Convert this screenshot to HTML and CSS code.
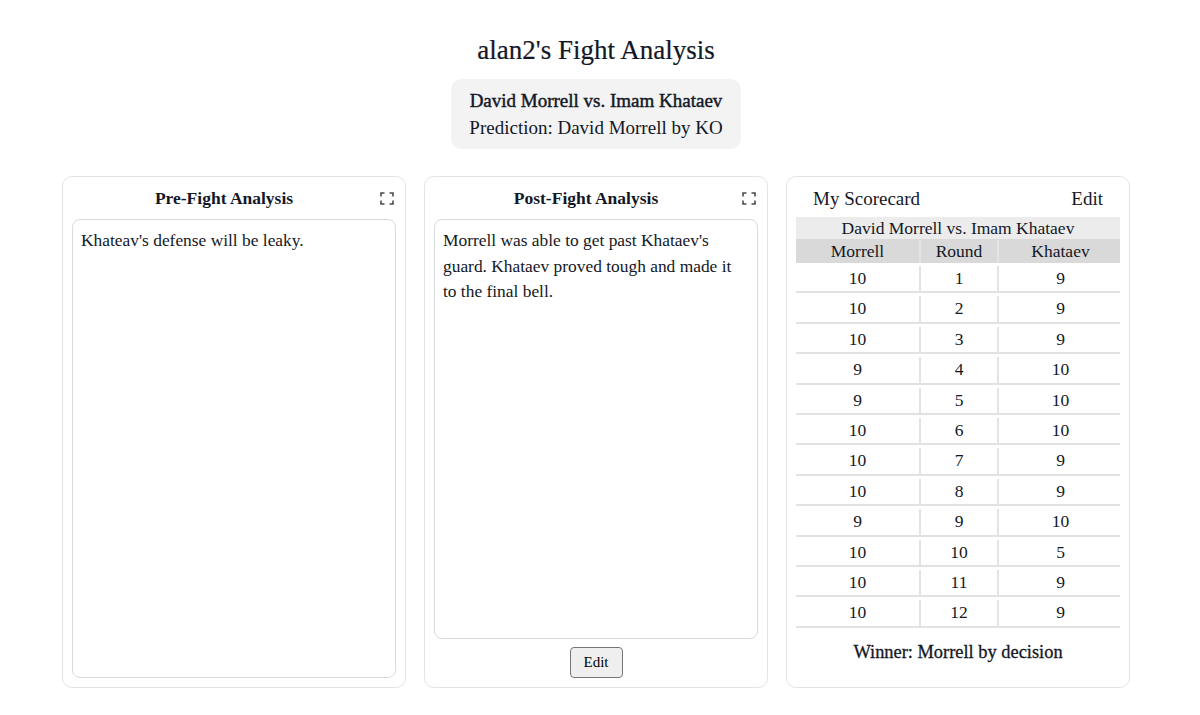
FILE: index.html
```html
<!DOCTYPE html>
<html>
<head>
<meta charset="utf-8">
<title>alan2's Fight Analysis</title>
<link rel="stylesheet" href="styles.css">
</head>
<body>
<div class="page">
  <header class="top">
    <h1 class="title">alan2's Fight Analysis</h1>
    <div class="fight-info">
      <div class="matchup">David Morrell vs. Imam Khataev</div>
      <div class="prediction">Prediction: David Morrell by KO</div>
    </div>
  </header>

  <main class="board">
    <section class="card">
      <div class="card-head">
        <h2 class="card-title">Pre-Fight Analysis</h2>
        <span class="expand">
          <svg width="14" height="13" viewBox="0 0 14 13"><path d="M1 4.5V1H4.5M9.5 1H13V4.5M13 8.5V12H9.5M4.5 12H1V8.5" fill="none" stroke="#4b4b4b" stroke-width="1.6"/></svg>
        </span>
      </div>
      <div class="note">Khateav's defense will be leaky.</div>
    </section>

    <section class="card">
      <div class="card-head">
        <h2 class="card-title">Post-Fight Analysis</h2>
        <span class="expand">
          <svg width="14" height="13" viewBox="0 0 14 13"><path d="M1 4.5V1H4.5M9.5 1H13V4.5M13 8.5V12H9.5M4.5 12H1V8.5" fill="none" stroke="#4b4b4b" stroke-width="1.6"/></svg>
        </span>
      </div>
      <div class="note">Morrell was able to get past Khataev's guard. Khataev proved tough and made it to the final bell.</div>
      <div class="actions"><button class="btn">Edit</button></div>
    </section>

    <section class="card">
      <div class="score-head">
        <span class="score-title">My Scorecard</span>
        <span class="score-edit">Edit</span>
      </div>
      <div class="scorecard">
        <div class="sc-title">David Morrell vs. Imam Khataev</div>
        <div class="sc-row sc-header">
          <div class="c">Morrell</div><div class="c mid">Round</div><div class="c">Khataev</div>
        </div>
        <div class="sc-row"><div class="c">10</div><div class="c mid">1</div><div class="c">9</div></div>
        <div class="sc-row"><div class="c">10</div><div class="c mid">2</div><div class="c">9</div></div>
        <div class="sc-row"><div class="c">10</div><div class="c mid">3</div><div class="c">9</div></div>
        <div class="sc-row"><div class="c">9</div><div class="c mid">4</div><div class="c">10</div></div>
        <div class="sc-row"><div class="c">9</div><div class="c mid">5</div><div class="c">10</div></div>
        <div class="sc-row"><div class="c">10</div><div class="c mid">6</div><div class="c">10</div></div>
        <div class="sc-row"><div class="c">10</div><div class="c mid">7</div><div class="c">9</div></div>
        <div class="sc-row"><div class="c">10</div><div class="c mid">8</div><div class="c">9</div></div>
        <div class="sc-row"><div class="c">9</div><div class="c mid">9</div><div class="c">10</div></div>
        <div class="sc-row"><div class="c">10</div><div class="c mid">10</div><div class="c">5</div></div>
        <div class="sc-row"><div class="c">10</div><div class="c mid">11</div><div class="c">9</div></div>
        <div class="sc-row"><div class="c">10</div><div class="c mid">12</div><div class="c">9</div></div>
      </div>
      <div class="winner">Winner: Morrell by decision</div>
    </section>
  </main>
</div>
</body>
</html>
```

FILE: styles.css
```css
* { box-sizing: border-box; }

html, body {
  margin: 0;
  padding: 0;
  background: #ffffff;
}

body {
  font-family: "Liberation Serif", "Times New Roman", serif;
  color: #141826;
}

.page {
  width: 1068px;
  margin-left: 62px;
}

.top {
  display: flex;
  flex-direction: column;
  align-items: center;
  padding-top: 34px;
}

.title {
  margin: 0;
  font-size: 27px;
  line-height: 32px;
  font-weight: normal;
  -webkit-text-stroke: 0.2px #141826;
}

.fight-info {
  margin-top: 13px;
  background: #f3f3f4;
  border-radius: 10px;
  padding: 8px 18px;
  text-align: center;
  font-size: 19px;
  line-height: 27px;
}

.matchup {
  font-size: 19px;
  font-weight: normal;
  -webkit-text-stroke: 0.45px #141826;
}

.board {
  margin-top: 27px;
  display: grid;
  grid-template-columns: 344px 344px 344px;
  gap: 18px;
  height: 512px;
}

.card {
  border: 1px solid #e1e3e8;
  border-radius: 10px;
  padding: 0 9px 9px;
  display: flex;
  flex-direction: column;
}

.card-head {
  display: flex;
  align-items: center;
  height: 42px;
}

.card-title {
  flex: 1;
  margin: 0;
  text-align: center;
  font-size: 17.5px;
  font-weight: bold;
}

.expand {
  width: 20px;
  display: flex;
  justify-content: center;
  padding-left: 2px;
}

.expand svg { display: block; }

.note {
  flex: 1;
  border: 1px solid #d7dae0;
  border-radius: 8px;
  padding: 8px 8px;
  font-size: 17.4px;
  line-height: 25.5px;
}

.actions {
  display: flex;
  justify-content: center;
  padding-top: 8px;
}

.btn {
  font-family: "Liberation Serif", "Times New Roman", serif;
  font-size: 15px;
  line-height: 19px;
  padding: 5px 13px;
  color: #000;
  background: #efefef;
  border: 1px solid #767676;
  border-radius: 4px;
}

.score-head {
  display: flex;
  justify-content: space-between;
  align-items: center;
  height: 40px;
  padding: 3px 17px 0;
  font-size: 19px;
}

.scorecard {
  font-size: 17.5px;
}

.sc-title {
  background: #ececec;
  text-align: center;
  height: 22px;
  line-height: 22px;
}

.sc-row {
  display: grid;
  grid-template-columns: 123px 80px 123px;
  height: 30.4px;
  padding-top: 3px;
  border-bottom: 2px solid #e2e2e2;
}

.sc-row .c {
  text-align: center;
  line-height: 25.4px;
}

.sc-row .mid {
  border-left: 2px solid #e3e3e3;
  border-right: 2px solid #e3e3e3;
}

.sc-header {
  background: #d9d9d9;
  height: 24px;
  padding-top: 1px;
  border-bottom: none;
}

.sc-header .c {
  line-height: 23px;
}

.sc-header .mid {
  border-color: #e4e4e4;
}

.winner {
  text-align: center;
  font-size: 18.4px;
  padding-top: 14px;
  -webkit-text-stroke: 0.3px #141826;
}
```
